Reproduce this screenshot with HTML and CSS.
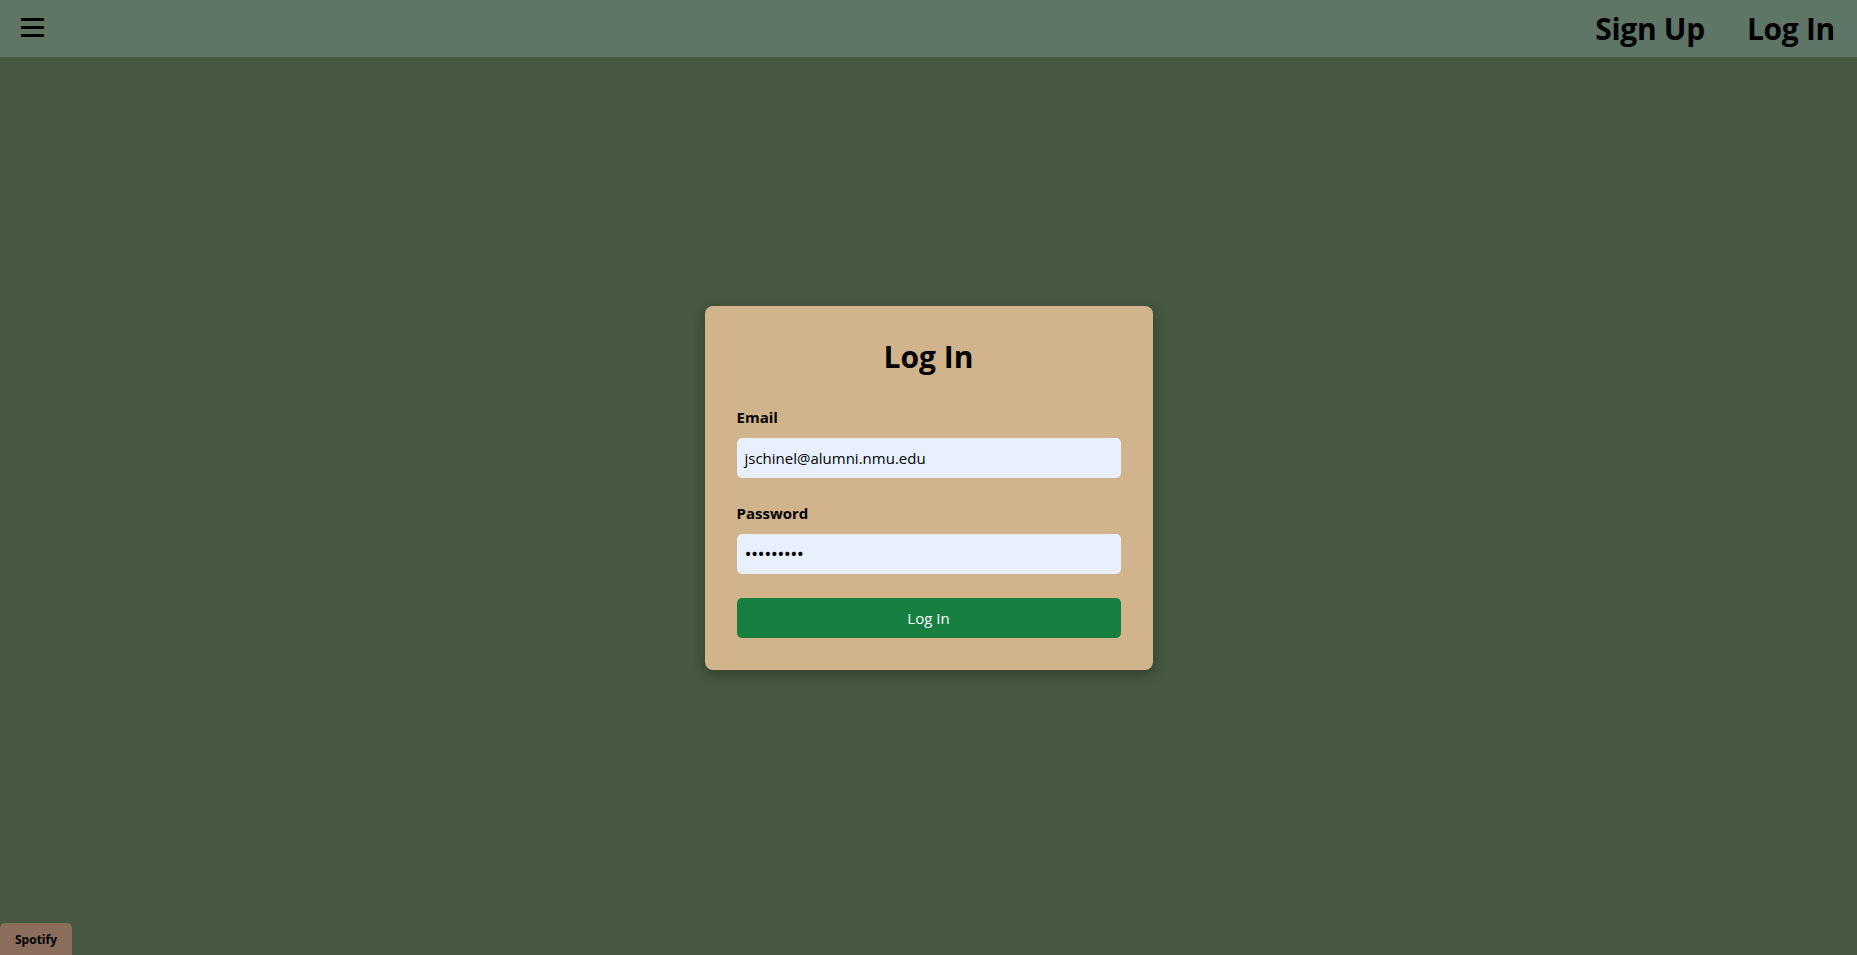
FILE: index.html
```html
<!DOCTYPE html>
<html>
<head>
<meta charset="utf-8">
<link rel="stylesheet" href="styles.css">
</head>
<body>
<header class="topbar">
  <button class="menu" aria-label="menu"><span></span><span></span><span></span></button>
  <nav class="nav">
    <a href="#">Sign Up</a>
    <a href="#">Log In</a>
  </nav>
</header>
<main class="main">
  <form class="card">
    <h1 class="title">Log In</h1>
    <label class="label">Email</label>
    <div class="input">jschinel@alumni.nmu.edu</div>
    <label class="label label-gap">Password</label>
    <div class="input dots">•••••••••</div>
    <button class="submit" type="button">Log In</button>
  </form>
</main>
<button class="spotify">Spotify</button>
</body>
</html>
```

FILE: styles.css
```css
html, body {
  margin: 0;
  padding: 0;
  height: 100%;
}
body {
  background: #465840;
  font-family: "Open Sans", "Noto Sans", sans-serif;
  color: #000;
  display: flex;
  flex-direction: column;
  overflow: hidden;
}
.topbar {
  height: 57px;
  flex: none;
  background: #5f7565;
  display: flex;
  align-items: center;
  justify-content: space-between;
  padding: 0 22px 0 21px;
}
.menu {
  background: none;
  border: 0;
  padding: 0;
  width: 23px;
  height: 23px;
  display: flex;
  flex-direction: column;
  justify-content: space-between;
  padding: 1px 0 3px;
  box-sizing: border-box;
  cursor: pointer;
}
.menu span {
  display: block;
  height: 3px;
  background: #000;
}
.nav {
  display: flex;
  gap: 42px;
}
.nav a {
  color: #000;
  text-decoration: none;
  font-weight: 700;
  font-size: 30px;
  letter-spacing: -0.3px;
}
.main {
  flex: 1;
  display: flex;
  align-items: center;
  justify-content: center;
  padding-bottom: 36px;
}
.card {
  width: 448px;
  box-sizing: border-box;
  background: #d2b48c;
  border-radius: 8px;
  padding: 32px;
  box-shadow: 0 4px 12px rgba(0, 0, 0, 0.3);
  display: flex;
  flex-direction: column;
}
.title {
  margin: 0 0 31px;
  text-align: center;
  font-size: 30px;
  line-height: 38px;
  font-weight: 700;
}
.label {
  display: block;
  font-weight: 700;
  font-size: 15px;
  line-height: 21px;
  margin-bottom: 10px;
}
.label-gap {
  margin-top: 25px;
}
.input {
  height: 40px;
  box-sizing: border-box;
  background: #e8f0fe;
  border-radius: 5px;
  padding: 0 8px;
  display: flex;
  align-items: center;
  font-size: 15px;
}
.dots {
  font-size: 19px;
  letter-spacing: -0.6px;
}
.submit {
  margin-top: 24px;
  height: 40px;
  border: 0;
  border-radius: 5px;
  background: #178040;
  color: #fff;
  font-family: inherit;
  font-size: 15px;
  cursor: pointer;
}
.spotify {
  position: fixed;
  left: 0;
  bottom: -6px;
  width: 72px;
  height: 38px;
  padding: 0 0 6px;
  border: 0;
  border-radius: 5px;
  background: #8b6d5c;
  color: #000;
  font-family: inherit;
  font-weight: 700;
  font-size: 12px;
}
```
